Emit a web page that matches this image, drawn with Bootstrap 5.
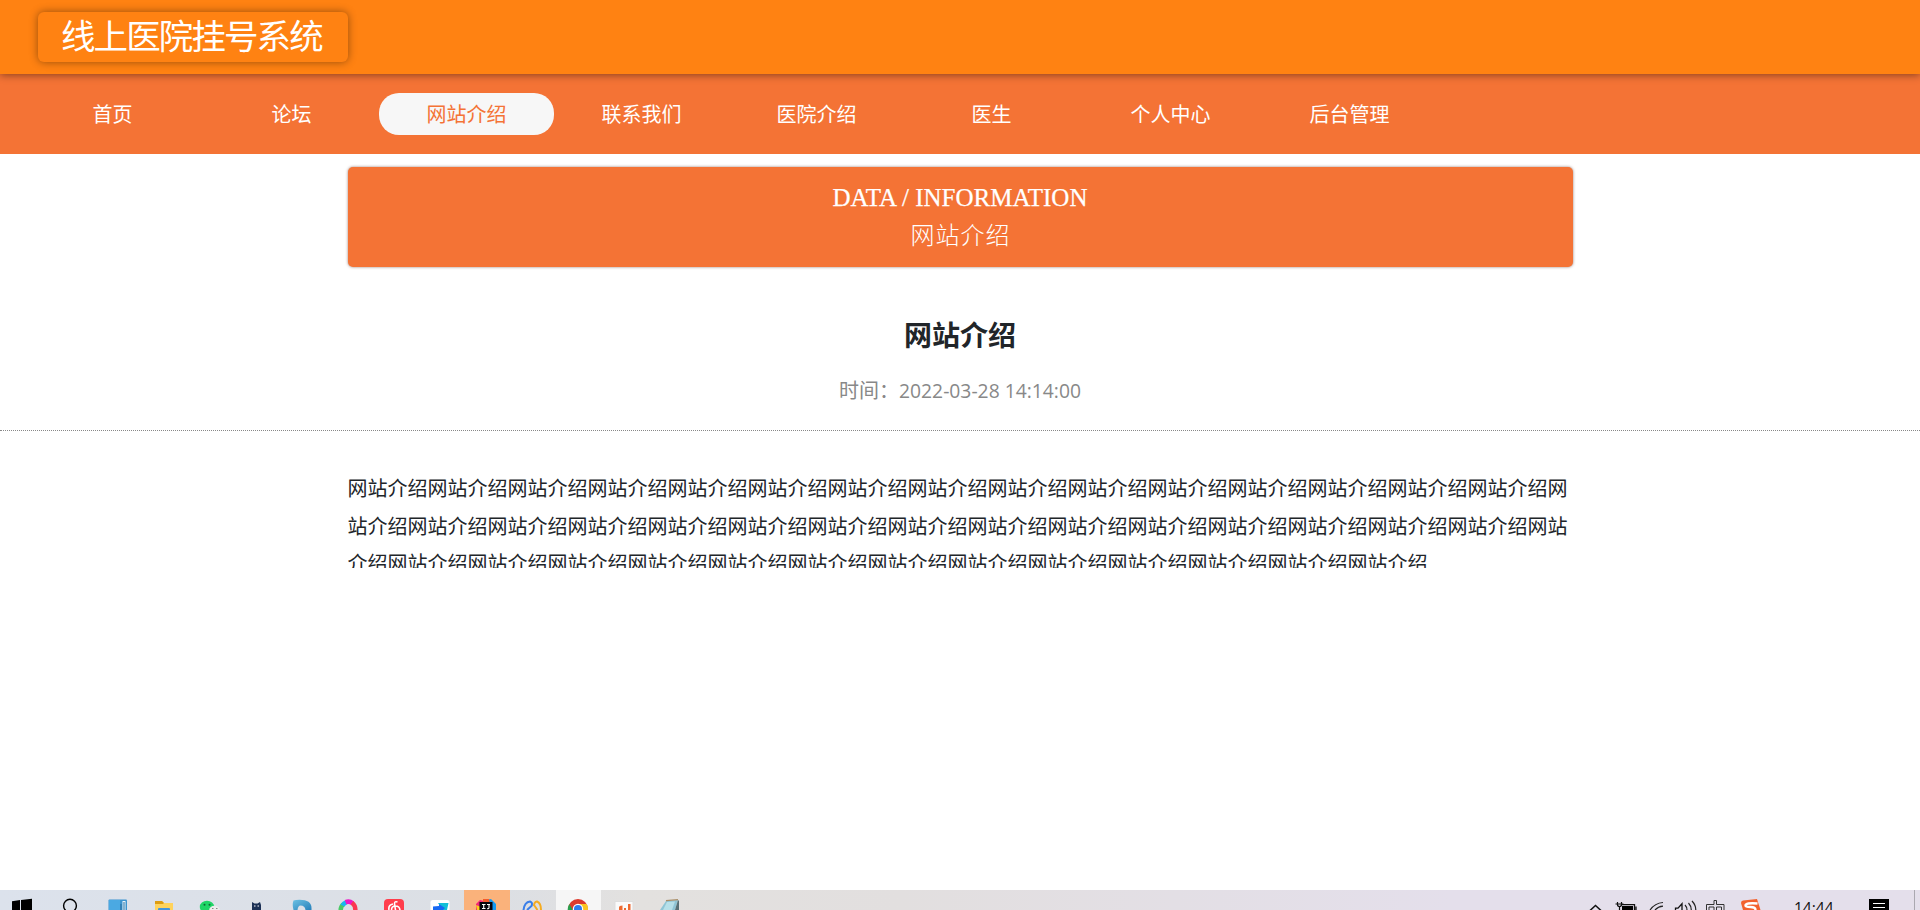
<!DOCTYPE html>
<html lang="zh-CN">
<head>
<meta charset="utf-8">
<title>线上医院挂号系统</title>
<link href="https://cdn.jsdelivr.net/npm/bootstrap@5.3.0/dist/css/bootstrap.min.css" rel="stylesheet">
<style>
body{font-family:"Open Sans","Noto Sans CJK SC",sans-serif;font-size:20px;height:910px;overflow:hidden}
.site-head{height:74px;background:#ff8212;box-shadow:0 1px 8px rgba(0,0,0,.45);z-index:2;padding-left:38px}
.brand-box{width:310px;height:50px;border-radius:6px;box-shadow:0 0 8px rgba(0,0,0,.42);color:#fff;font-family:"Noto Sans CJK SC",sans-serif;font-size:34.5px;font-weight:400;letter-spacing:-1.9px;line-height:45px;padding-left:23px;white-space:nowrap}
.site-nav{height:80px;background:#f47335;padding-left:25px}
.site-nav .nav-link{width:175px;height:42px;line-height:42px;padding:0;border-radius:20px;color:#fff;text-align:center;font-family:"Noto Sans CJK SC",sans-serif;font-weight:400;font-size:20px}
.site-nav .nav-link.active{background:#f7f7f7;color:#f47335}
.gap-after{margin-right:4px}
.wrap{width:1225px}
.banner{height:100px;margin-top:13px;background:#f47335;border-radius:5px;box-shadow:0 0 3px rgba(70,20,0,.55);color:#fff;padding-bottom:3px}
.banner-en{font-family:"Liberation Serif",serif;font-size:25px;line-height:37px;-webkit-text-stroke:.25px #fff}
.banner-cn{font-family:"Noto Sans CJK SC",sans-serif;font-weight:300;font-size:24px;letter-spacing:1px;line-height:35px;padding:0 0 2px 1px}
.art-title{font-family:"Noto Sans CJK SC",sans-serif;font-size:28px;font-weight:700;line-height:34px;margin-top:50px}
.art-time{color:#888;font-weight:400;line-height:30px;margin-top:25px}
.digits{font-size:19.300px}
.rule{border-bottom:1px dotted #888;height:25px}
.art-body{height:104px;margin-top:33px;padding-top:5px;overflow:hidden;line-height:37.5px;font-family:"Noto Sans CJK SC",sans-serif;font-weight:400;word-break:break-all}
.taskbar{height:20px;background:linear-gradient(90deg,#dce2ec 0,#dcdfe4 500px,#e3e1df 640px,#e2dfdf 900px,#e4dfeb 1450px)}
.taskbar svg{display:block;flex:none}
.task-hot{background:#fab27b}
.task-open{background:#f6f6f6}
.clock{width:60px;height:20px;font-size:15.500px;line-height:20px;padding-top:8px;color:#111;white-space:nowrap}
</style>
</head>
<body class="d-flex flex-column bg-white">
<header class="site-head position-relative d-flex align-items-center flex-shrink-0">
  <div class="brand-box">线上医院挂号系统</div>
</header>
<nav class="site-nav nav flex-nowrap align-items-center flex-shrink-0">
  <a class="nav-link gap-after" href="#">首页</a>
  <a class="nav-link" href="#">论坛</a>
  <a class="nav-link active" href="#">网站介绍</a>
  <a class="nav-link" href="#">联系我们</a>
  <a class="nav-link" href="#">医院介绍</a>
  <a class="nav-link gap-after" href="#">医生</a>
  <a class="nav-link gap-after" href="#">个人中心</a>
  <a class="nav-link" href="#">后台管理</a>
</nav>
<main class="flex-grow-1">
  <section class="wrap banner mx-auto d-flex flex-column justify-content-center text-center">
    <div class="banner-en">DATA / INFORMATION</div>
    <div class="banner-cn">网站介绍</div>
  </section>
  <h1 class="art-title text-center mb-0">网站介绍</h1>
  <div class="art-time text-center">时间：<span class="digits">2022-03-28 14:14:00</span></div>
  <div class="rule"></div>
  <article class="wrap art-body mx-auto">网站介绍网站介绍网站介绍网站介绍网站介绍网站介绍网站介绍网站介绍网站介绍网站介绍网站介绍网站介绍网站介绍网站介绍网站介绍网站介绍网站介绍网站介绍网站介绍网站介绍网站介绍网站介绍网站介绍网站介绍网站介绍网站介绍网站介绍网站介绍网站介绍网站介绍网站介绍网站介绍网站介绍网站介绍网站介绍网站介绍网站介绍网站介绍网站介绍网站介绍网站介绍网站介绍网站介绍网站介绍</article>
</main>
<footer class="taskbar d-flex flex-shrink-0 overflow-hidden">
  <svg width="44" height="20"><path d="M12 11.300l8-1.200V20h-8zM21 10l11-1.300V20H21z"/></svg>
  <svg width="52" height="20"><circle cx="26" cy="15.700" r="6.400" fill="none" stroke="#000" stroke-width="1.400"/></svg>
  <svg width="46" height="20"><rect x="12.500" y="9.500" width="18.500" height="14" rx="1" fill="#3d94cf"/><path d="M13 10h11v10H13z" fill="#4ba9e2"/><path d="M26.500 11h3v9h-3z" fill="#e8f4fb"/><path d="M25 14v6M28 12v8" stroke="#296f9f" stroke-width="1"/></svg>
  <svg width="46" height="20"><path d="M13 11h7l2 2h9v7H13z" fill="#ffd35c"/><path d="M13 11h7l2 2-1 1h-8z" fill="#dd9c12"/><path d="M16 20v-1q0-1 1-1h10q1 0 1 1v1z" fill="#4595dc"/></svg>
  <svg width="46" height="20"><ellipse cx="19" cy="17" rx="7.200" ry="6.200" fill="#1fd566"/><ellipse cx="26.500" cy="20" rx="5.300" ry="4.200" fill="#ececec"/><g fill="#0b6a35"><circle cx="16.500" cy="14.800" r="1"/><circle cx="21.500" cy="14.800" r="1"/></g><path d="M24 18.500h1.500M28 18.500h1.500" stroke="#888"/></svg>
  <svg width="46" height="20"><path d="M18 20v-8l2.500 1.500h3L26 12l1 3v5z" fill="#1c3156"/><path d="M20 16h1.500M23.500 16H25" stroke="#fff"/></svg>
  <svg width="46" height="20"><defs><linearGradient id="dg" x2="1" y2="1"><stop stop-color="#6cc1e3"/><stop offset="1" stop-color="#2781bb"/></linearGradient></defs><path d="M13.500 10.500q2-.8 6-.8 12 0 12 8.300v2h-6q-.5-4.500-5-4.500-2.500 0-3 4.500h-4q-1.500-5.500 0-9.500z" fill="url(#dg)"/></svg>
  <svg width="46" height="20"><g fill="none" stroke-width="4.500"><path d="M14.700 20a7.500 7.500 0 0 1 3-6" stroke="#49c967"/><path d="M16.500 15.500a7.500 7.500 0 0 1 4-3.400" stroke="#19b7ef"/><path d="M19.500 12.200q4-1.500 7 1" stroke="#ed18c7"/><path d="M26 12.800q3.300 2.400 3.400 7.200" stroke="#fb3652"/></g></svg>
  <svg width="46" height="20"><rect x="12" y="9" width="20" height="20" rx="4" fill="#ff3d4c"/><path d="M17 20q-1-5 4-6M25.500 12q-3-1-3 1.500l1 6.500M19.500 20q0-4 4-4t4.500 4" fill="none" stroke="#fff" stroke-width="1.600"/></svg>
  <svg width="46" height="20"><rect x="12.500" y="10" width="19" height="19" rx="2.500" fill="#fff"/><path d="M20 13h10.500l-1.500 7h-4z" fill="#12bfd7"/><path d="M15 16.500l6-.5v-2l6 4-2 2H15z" fill="#1769f3"/></svg>
  <svg class="task-hot" width="46" height="20"><path d="M12 14l4-4 4 1-1 9h-7z" fill="#f52778"/><path d="M12 15l5 2v3h-4z" fill="#ffcd1a"/><path d="M22 10l5-1 5 5v6h-6z" fill="#159bf2"/><path d="M19 9l6 0 1 4h-7z" fill="#f45b2b"/><rect x="15.500" y="12" width="13" height="12" fill="#07050d"/><path d="M18 14.500h3.500M19.700 14.500v4M18 18.500h3.500M23 14.500h3M25 14.500v3q0 1.500-2 1.300" fill="none" stroke="#fff" stroke-width="1.100"/></svg>
  <svg width="46" height="20"><path d="M13.500 20q1-8 6.500-8.500 3 1 1.500 4.500L17 20" fill="none" stroke="#397ee9" stroke-width="2"/><path d="M24 16q0-4 3-4.500 4 1.500 4 8.500M24 15l3.500 5" fill="none" stroke="#f5ac21" stroke-width="2"/></svg>
  <svg class="task-open" width="45" height="20"><circle cx="22" cy="19" r="10" fill="#dd3a2d"/><path d="M13.300 14L18 22h-6q-1-4 1.300-8z" fill="#29a04d"/><path d="M22 14h8.800q1.200 2 1.200 6H22z" fill="#fbc521"/><circle cx="22" cy="19" r="5.200" fill="#fff"/><circle cx="22" cy="19" r="4" fill="#2f7ced"/></svg>
  <svg width="47" height="20"><rect x="14" y="11.500" width="18" height="14" fill="#fafafa" stroke="#ddd"/><path d="M18 20v-2.500q0-2 3.500-2v4.500zM23 18h2v2h-2zM27 14h2.500v6H27z" fill="#ee6930"/></svg>
  <svg width="46" height="20"><path d="M18 11l12-1-3 10H12z" fill="#8fc5d5"/><path d="M19 12l8-.5-3 8.500h-9z" fill="#b6e0e9"/><path d="M30 10l1 1v9h-4z" fill="#587176"/><path d="M18 10.700l12-1" stroke="#a98e68" stroke-width="1.300"/></svg>
  <div class="d-flex ms-auto">
    <svg width="30" height="20"><path d="M5.500 21l6-5.500 6 5.500" fill="none" stroke="#111" stroke-width="1.500"/></svg>
    <svg width="34" height="20"><g transform="translate(-4)"><path d="M7.500 12v2.500q0 2 2 2t2-2V12M5.500 14h8M9.500 16v4" fill="none" stroke="#111" stroke-width="1.200"/><path d="M12 14.700h12.500V20M26 16.500V20" fill="none" stroke="#111" stroke-width="1.300"/><path d="M12 16h11v4H12z"/></g></svg>
    <svg width="26" height="20"><path d="M2 20q5-7 13-7.500M7 20q3-3.500 8-3.800" fill="none" stroke="#222" stroke-width="1.200"/></svg>
    <svg width="30" height="20"><path d="M1.500 20v-1.800H4l4-4.500V20" fill="none" stroke="#111" stroke-width="1.300"/><path d="M11 15q2 2 2 5M14.500 13q2.800 3 2.800 7M18 11q3.800 4 3.800 9" fill="none" stroke="#222" stroke-width="1.200"/></svg>
    <svg width="36" height="20"><path d="M2.500 20v-5.500H10V10.500h2.500v4H20V20M5 20v-3h5v3M12.500 20v-3h5v3" fill="none" stroke="#333" stroke-width="1"/></svg>
    <svg width="54" height="20"><path d="M1 13q0-2 2-2.400l14-1.500L20.500 20H3z" fill="#f2612d"/><path d="M17.500 13.500q-12-1-12 2 0 1.500 5 1.500t5 3" fill="none" stroke="#fff" stroke-width="2.400"/></svg>
    <div class="clock flex-shrink-0">14:44</div>
    <svg width="66" height="20"><path d="M15 9h20v11H15z"/><path d="M19 13.500h12M19 17.500h12" stroke="#fff" stroke-width="1"/><path d="M60.500 0v20" stroke="#aaa8b0"/></svg>
  </div>
</footer>
<script src="https://cdn.jsdelivr.net/npm/bootstrap@5.3.0/dist/js/bootstrap.bundle.min.js"></script>
</body>
</html>
